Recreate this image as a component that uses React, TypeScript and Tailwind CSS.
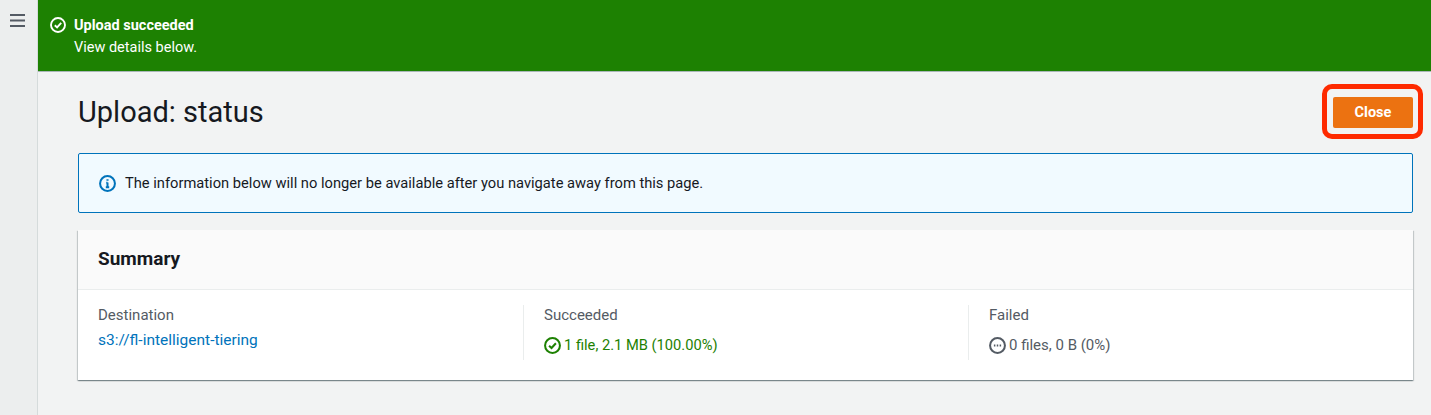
const CheckIcon = ({ className }: { className: string }) => (
  <svg viewBox="0 0 16 16" fill="none" stroke="currentColor" strokeWidth="1.9" className={className}>
    <circle cx="8" cy="8" r="7" />
    <path d="M4.8 8.2 7.1 10.4 11.2 5.9" />
  </svg>
);

function Column({ label, first, children }: { label: string; first?: boolean; children: React.ReactNode }) {
  return (
    <div className={first ? "w-[445px] pl-5" : "w-[445px] border-l border-[#eaeded] pl-5"}>
      <div className="text-[15px] leading-[20px] text-[#545b64]">{label}</div>
      <div className="mt-[5px]">{children}</div>
    </div>
  );
}

export default function App() {
  return (
    <div className="flex h-[415px] w-[1431px] overflow-hidden bg-[#f2f3f3] font-['Roboto',sans-serif] text-[#16191f]">
      <div className="w-[38px] shrink-0 border-r border-[#d5dbdb] bg-[#eceeee] pl-[10px] pt-[14px]">
        <svg viewBox="0 0 15 13" className="h-[13px] w-[15px] text-[#545b64]" fill="none" stroke="currentColor" strokeWidth="2">
          <path d="M0 1h15M0 6.5h15M0 12h15" />
        </svg>
      </div>
      <div className="flex min-w-0 flex-1 flex-col">
        <div className="flex h-[72px] items-start gap-[8px] border-b border-[#aab7b8] bg-[#1d8102] pl-[12px] pt-[15px] text-white">
          <CheckIcon className="mt-[2px] h-[16px] w-[16px]" />
          <div>
            <div className="text-[14.5px] font-bold leading-[22px]">Upload succeeded</div>
            <div className="text-[14.5px] leading-[22px]">View details below.</div>
          </div>
        </div>
        <div className="pl-[40px] pr-[18px]">
          <div className="flex h-[81px] items-center justify-between">
            <h1 className="mb-[2px] text-[29px] leading-[36px]">Upload: status</h1>
            <div className="mr-[-10px] mt-[-2px] rounded-[10px] border-[5px] border-[#fe2a00] pb-[6px] pl-[6px] pr-[5px] pt-[8px]">
              <button className="block h-[31px] w-[80px] rounded-[2px] bg-[#ec7211] text-[14.5px] font-bold text-white">Close</button>
            </div>
          </div>
          <div className="flex h-[60px] items-center gap-[9px] rounded-[2px] border border-[#0073bb] bg-[#f1faff] pl-[20px] text-[14.7px]">
            <svg viewBox="0 0 16 16" fill="none" stroke="#0073bb" strokeWidth="1.9" className="h-[17px] w-[17px] shrink-0">
              <circle cx="8" cy="8" r="7" />
              <path d="M8 7v4.5M6.4 11.6h3.2M6.8 7.2H8" />
              <path d="M8 4v1.4" strokeWidth="2" />
            </svg>
            <span>The information below will no longer be available after you navigate away from this page.</span>
          </div>
          <div className="mt-[17px] bg-white shadow-[0_1px_1px_0_rgba(0,28,36,0.3),1px_1px_1px_0_rgba(0,28,36,0.15),-1px_1px_1px_0_rgba(0,28,36,0.15)]">
            <div className="flex h-[60px] items-center border-b border-[#eaeded] bg-[#fafafa] pl-5 text-[19px] font-bold">Summary</div>
            <div className="flex pb-[20px] pt-[15px]">
              <Column label="Destination" first>
                <a className="block text-[15.5px] leading-[20px] text-[#0073bb]">s3://fl-intelligent-tiering</a>
              </Column>
              <Column label="Succeeded">
                <div className="flex h-[30px] items-center gap-[3px] text-[14.7px] text-[#1d8102]">
                  <CheckIcon className="h-[17px] w-[17px] shrink-0" />
                  1 file, 2.1 MB (100.00%)
                </div>
              </Column>
              <Column label="Failed">
                <div className="flex h-[30px] items-center gap-[3px] text-[15px] text-[#545b64]">
                  <svg viewBox="0 0 16 16" fill="none" stroke="currentColor" strokeWidth="1.9" className="h-[17px] w-[17px] shrink-0">
                    <circle cx="8" cy="8" r="7" />
                    <path d="M4.6 8h1.4M7.3 8h1.4M10 8h1.4" />
                  </svg>
                  0 files, 0 B (0%)
                </div>
              </Column>
            </div>
          </div>
        </div>
      </div>
    </div>
  );
}
